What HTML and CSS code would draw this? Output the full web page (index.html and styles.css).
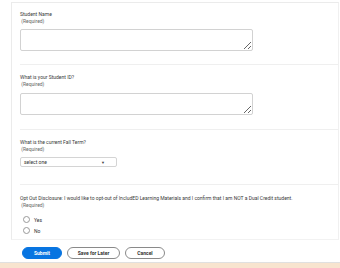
FILE: index.html
```html
<!DOCTYPE html>
<html lang="en">
<head>
    <meta charset="UTF-8">
    <meta name="viewport" content="width=device-width, initial-scale=1.0">
    <title>Student Form</title>
    <link rel="stylesheet" href="styles.css">
</head>
<body>
    <div class="page">
        <div class="card">
            <div class="section first">
                <label class="label" for="studentName">Student Name<br><span class="req">&nbsp;(Required)</span></label>
                <textarea id="studentName" class="field"></textarea>
            </div>

            <div class="section">
                <label class="label" for="studentId">What is your Student ID?<br><span class="req">&nbsp;(Required)</span></label>
                <textarea id="studentId" class="field"></textarea>
            </div>

            <div class="section term">
                <div class="label">What is the current Fall Term?<br><span class="req">&nbsp;(Required)</span></div>
                <div class="select">
                    <span>select one</span>
                    <span class="caret">&#9660;</span>
                </div>
            </div>

            <div class="section last">
                <div class="label">Opt Out Disclosure: I would like to opt-out of IncludED Learning Materials and I confirm that I am NOT a Dual Credit student.<br><span class="req">&nbsp;(Required)</span></div>
                <div class="radios">
                    <div class="radio-row"><span class="radio"></span>Yes</div>
                    <div class="radio-row"><span class="radio"></span>No</div>
                </div>
            </div>
        </div>

        <div class="actions">
            <button type="button" class="btn primary">Submit</button>
            <button type="button" class="btn">Save for Later</button>
            <button type="button" class="btn">Cancel</button>
        </div>
    </div>
    <div class="footer"></div>
</body>
</html>
```

FILE: styles.css
```css
body {
    font-family: Roboto, "Noto Sans", sans-serif;
    background-color: #fff;
    margin: 0;
    width: 340px;
    height: 268px;
    overflow: hidden;
    display: flex;
    flex-direction: column;
}

.page {
    flex: 1;
    padding-top: 2px;
}

.card {
    margin-left: 11px;
    margin-right: 1px;
    height: 236px;
    border-left: 1px solid #ebebeb;
    border-top: 1px solid #ebebeb;
    border-right: 1px solid #f0f0f0;
    border-bottom: 1px solid #f2f2f2;
}

.section {
    margin-left: 8px;
    padding: 9px 0 14px 0;
    border-bottom: 1px solid #efefef;
}

.section.first {
    padding-top: 8px;
    padding-bottom: 13px;
}

.section.term {
    padding-bottom: 17px;
}

.section.last {
    border-bottom: none;
    padding-top: 10px;
    padding-bottom: 0;
}

.label {
    display: block;
    font-size: 5px;
    line-height: 7px;
    color: #3a3a3a;
    margin-bottom: 4px;
}

.section:nth-child(2) .label {
    margin-bottom: 5px;
}

.req {
    color: #666;
}

.field {
    display: block;
    width: 233px;
    height: 22px;
    margin: 0;
    padding: 0;
    box-sizing: border-box;
    border: 1px solid #d2d2d2;
    border-radius: 2px;
    background: #fff;
}

.select {
    width: 97px;
    height: 10px;
    box-sizing: border-box;
    border: 1px solid #d4d4d4;
    border-radius: 2px;
    display: flex;
    align-items: center;
    justify-content: space-between;
    padding: 0 11px 0 3px;
    font-size: 5px;
    color: #333;
}

.caret {
    font-size: 4px;
    color: #444;
}

.radios {
    margin-top: 5px;
}

.radio-row {
    display: flex;
    align-items: center;
    height: 11px;
    padding-left: 3px;
    font-size: 5px;
    color: #333;
}

.radio {
    width: 7px;
    height: 7px;
    box-sizing: border-box;
    border: 1px solid #999;
    border-radius: 50%;
    margin-right: 4px;
    background: #fff;
}

.actions {
    display: flex;
    gap: 5px;
    padding: 7px 0 0 22px;
}

.btn {
    height: 12px;
    width: 40px;
    padding: 0;
    border: 1px solid #8a8a8a;
    border-radius: 6px;
    background: #fff;
    color: #333;
    font-family: Roboto, "Noto Sans", sans-serif;
    font-size: 5px;
    font-weight: bold;
    cursor: pointer;
}

.btn:nth-child(2) {
    width: 53px;
}

.btn.primary {
    background-color: #0875e1;
    border-color: #0875e1;
    color: #fff;
}

.footer {
    height: 5px;
    border-top: 1px solid #e0e0e0;
    background-color: #f8e4cf;
}
```
